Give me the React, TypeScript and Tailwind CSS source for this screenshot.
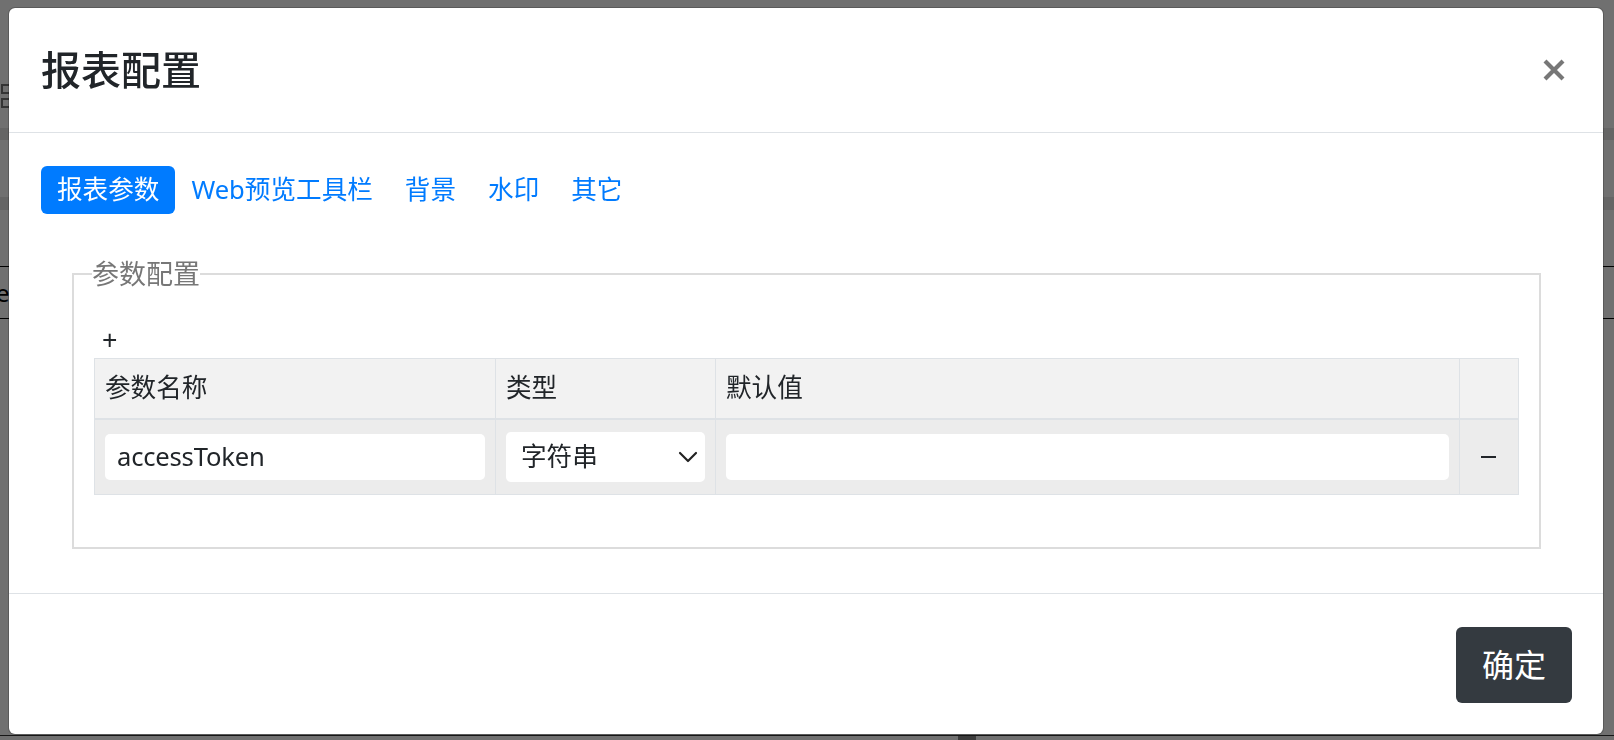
import { ChevronDown } from 'lucide-react'

const font = "font-['Noto_Sans','Noto_Sans_CJK_SC',sans-serif]"

function BackgroundPage() {
  return (
    <div className="flex h-[740px] flex-col bg-white">
      <div className="mt-[84px] flex h-[28px] flex-col gap-[4px] pl-[1px]">
        <div className="h-[10px] w-[10px] border-2 border-[#777]" />
        <div className="h-[10px] w-[10px] border-2 border-[#777]" />
      </div>
      <div className="mt-[16px] h-[12px] bg-[#e6e6e6]" />
      <div className="mt-[57px] h-[13px] bg-[#e6e6e6]" />
      <div className="mt-[56px] flex h-[53px] items-center border-y border-black text-[24px] text-black">
        <span className="-ml-[4px]">e</span>
      </div>
      <div className="mt-auto flex h-[5px] border-t border-[#333]">
        <div className="ml-[958px] h-full w-[18px] bg-[#8a8a8a]" />
      </div>
    </div>
  )
}

function CloseIcon() {
  return (
    <svg width="22" height="22" viewBox="0 0 22 22" className="mr-[6px]">
      <path d="M2 2 L20 20 M20 2 L2 20" stroke="#777777" strokeWidth="4.2" strokeLinecap="butt" />
    </svg>
  )
}

function Tabs() {
  const tabs = ['报表参数', 'Web预览工具栏', '背景', '水印', '其它']
  return (
    <nav className="flex">
      {tabs.map((t, i) => (
        <a
          key={t}
          className={`block rounded-[6px] px-4 py-2 text-[25.6px] leading-8 ${i === 0 ? 'bg-[#007bff] text-white' : 'text-[#007bff]'}`}
        >
          {t}
        </a>
      ))}
    </nav>
  )
}

function ParamTable() {
  return (
    <table className="w-[1424px] table-fixed border-collapse text-[25.6px]">
      <colgroup>
        <col className="w-[401px]" />
        <col className="w-[220px]" />
        <col className="w-[744px]" />
        <col className="w-[59px]" />
      </colgroup>
      <thead>
        <tr className="h-[61px] bg-[#f2f2f2]">
          <th className="border border-b-2 border-[#dee2e6] px-[10px] text-left font-normal">参数名称</th>
          <th className="border border-b-2 border-[#dee2e6] px-[10px] text-left font-normal">类型</th>
          <th className="border border-b-2 border-[#dee2e6] px-[10px] text-left font-normal">默认值</th>
          <th className="border border-b-2 border-[#dee2e6]" />
        </tr>
      </thead>
      <tbody>
        <tr className="bg-[#ececec]">
          <td className="border border-[#dee2e6] px-[10px] py-3 align-middle">
            <div className="flex h-[46px] items-center rounded-[5px] bg-white px-3 leading-none tracking-[-0.2px]">accessToken</div>
          </td>
          <td className="border border-[#dee2e6] px-[10px] py-3 align-middle">
            <div className="flex h-[50px] items-center justify-between rounded-[5px] bg-white pl-[15px] pr-[1px]">
              <span>字符串</span>
              <ChevronDown size={32} strokeWidth={1.6} className="text-[#222]" />
            </div>
          </td>
          <td className="border border-[#dee2e6] px-[10px] py-3 align-middle">
            <div className="h-[46px] rounded-[5px] bg-white" />
          </td>
          <td className="border border-[#dee2e6] align-middle">
            <div className="ml-[21px] h-[2.5px] w-[15px] bg-[#212529]" />
          </td>
        </tr>
      </tbody>
    </table>
  )
}

export default function App() {
  return (
    <div className={`relative h-[740px] w-full overflow-hidden text-[#212529] ${font}`}>
      <BackgroundPage />
      <div className="fixed inset-0 bg-black/56 pl-[8px] pr-[10px] pt-[7px]">
        <div className="flex h-[728px] flex-col rounded-[7px] border border-black/20 bg-white bg-clip-padding">
          <header className="flex h-[125px] shrink-0 items-center justify-between border-b border-[#dee2e6] px-8">
            <h4 className="text-[40px] font-medium leading-[1.2]">报表配置</h4>
            <CloseIcon />
          </header>

          <div className="flex-1 px-8 pt-[33px]">
            <Tabs />
            <fieldset className="ml-[31px] mr-[33px] mt-[40px] border-2 border-[#dcdcdc] px-5 pb-[52px]">
              <legend className="-ml-[2px] text-[27px] leading-normal text-[#777]">参数配置</legend>
              <div className="ml-[8px] mt-[27px] text-[27px] leading-9">+</div>
              <ParamTable />
            </fieldset>
          </div>

          <footer className="flex h-[141px] shrink-0 justify-end border-t border-[#dee2e6] pr-[31px] pt-[33px]">
            <button className="h-[76px] rounded-[6px] bg-[#343a40] px-[26px] text-[32px] leading-[48px] text-white">
              确定
            </button>
          </footer>
        </div>
      </div>
    </div>
  )
}
